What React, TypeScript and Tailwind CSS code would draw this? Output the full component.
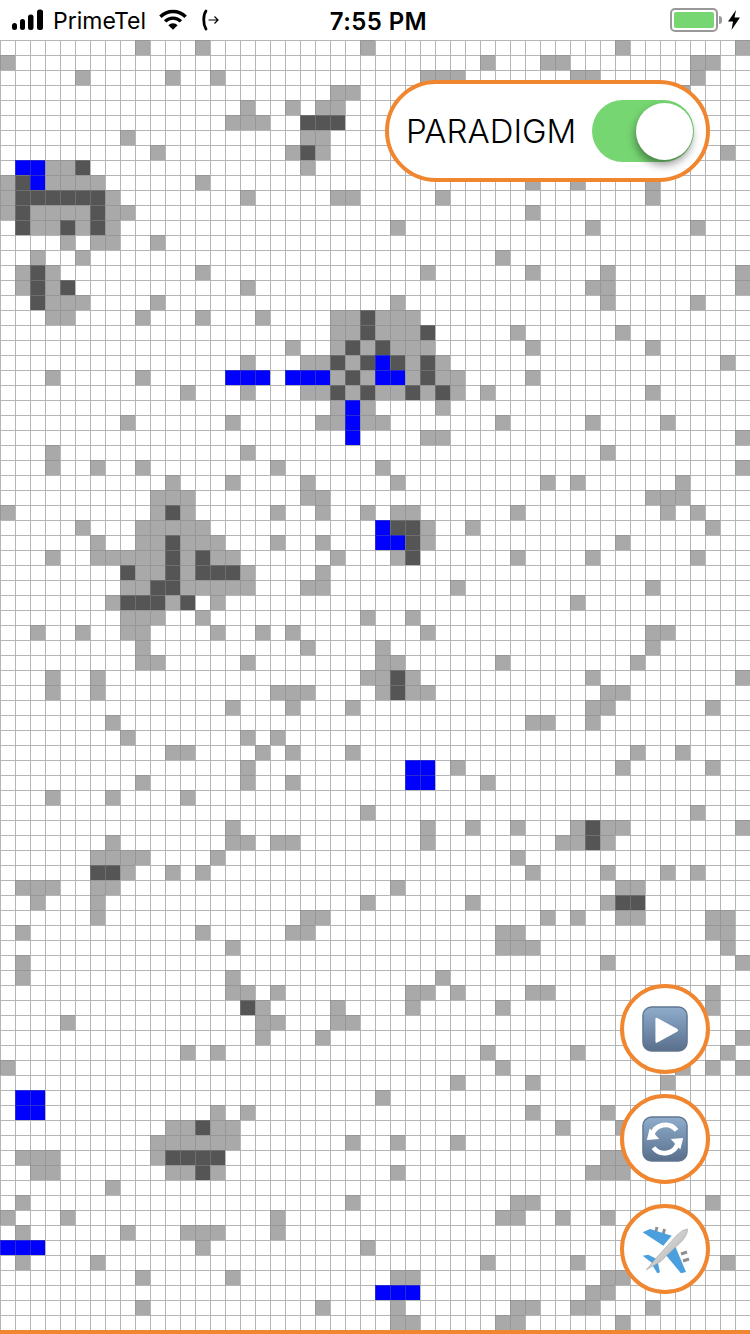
import * as React from "react";

type Row = { g?: number[]; d?: number[]; b?: number[] };

// sparse board: row index -> grey / dark / blue columns
const BOARD: Record<number, Row> = {
  0: { g: [9, 13, 24, 41, 49] },
  1: { g: [0, 32, 36, 37, 46, 47] },
  2: { g: [5, 11, 14, 28, 29, 30, 38, 39, 46] },
  3: { g: [22, 23, 45] },
  4: { g: [16, 19, 21, 22] },
  5: { g: [15, 16, 17], d: [20, 21, 22] },
  6: { g: [8, 20, 21] },
  7: { g: [10, 19, 21, 48], d: [20] },
  8: { g: [3, 4, 20], b: [1, 2], d: [5] },
  9: { g: [0, 3, 4, 5, 6, 13, 35, 38, 43], d: [1], b: [2] },
  10: { g: [0, 7, 16, 22, 23, 29, 43], d: [1, 2, 3, 4, 5, 6] },
  11: { g: [0, 2, 3, 4, 5, 7, 8, 35], d: [1, 6] },
  12: { g: [2, 3, 5, 7, 26, 39, 46], d: [1, 4, 6] },
  13: { g: [4, 6, 7, 10] },
  14: { g: [2, 5, 33] },
  15: { g: [1, 3, 13, 28, 35, 40, 49], d: [2] },
  16: { g: [1, 3, 16, 39, 40, 49], d: [2, 4] },
  17: { g: [3, 4, 5, 10, 26, 40, 46], d: [2] },
  18: { g: [3, 4, 9, 13, 17, 22, 23, 25, 26, 27], d: [24] },
  19: { g: [22, 23, 25, 26, 27, 34, 41], d: [24, 28] },
  20: { g: [19, 22, 24, 26, 27, 28, 35, 43], d: [23, 25] },
  21: { g: [16, 20, 21, 23, 27, 29, 48], d: [22, 24, 26, 28], b: [25] },
  22: { g: [3, 9, 22, 24, 27, 29, 30, 35], d: [23, 28], b: [15, 16, 17, 19, 20, 21, 25, 26] },
  23: { g: [12, 16, 20, 21, 23, 25, 26, 28, 30, 32, 43], d: [22, 24, 27, 29] },
  24: { g: [22, 24, 29], b: [23] },
  25: { g: [8, 15, 21, 22, 24, 25, 33, 39, 44], b: [23] },
  26: { g: [28, 29, 49], b: [23] },
  27: { g: [3, 16, 40] },
  28: { g: [3, 6, 9, 18, 25, 49] },
  29: { g: [11, 15, 20, 26, 36, 38, 45] },
  30: { g: [10, 11, 12, 20, 21, 43, 44, 45] },
  31: { g: [0, 10, 12, 18, 21, 24, 26, 27, 34, 44, 46], d: [11] },
  32: { g: [5, 9, 10, 11, 12, 13, 28, 31, 47], d: [26, 27], b: [25] },
  33: { g: [6, 9, 10, 12, 13, 14, 18, 21, 28, 41], d: [11, 27], b: [25, 26] },
  34: { g: [3, 6, 7, 8, 9, 10, 12, 14, 15, 22, 26, 34, 39, 46], d: [11, 13, 27] },
  35: { g: [9, 10, 12, 16, 21], d: [8, 11, 13, 14, 15] },
  36: { g: [8, 9, 12, 13, 14, 15, 16, 20, 21, 30, 43], d: [10, 11] },
  37: { g: [7, 11, 14, 38], d: [8, 9, 10, 12] },
  38: { g: [8, 9, 10, 13, 24, 27] },
  39: { g: [2, 5, 8, 9, 14, 17, 19, 28, 43, 44] },
  40: { g: [9, 20, 25, 43] },
  41: { g: [9, 10, 16, 25, 26, 33, 42] },
  42: { g: [3, 6, 24, 25, 27, 39, 49], d: [26] },
  43: { g: [3, 6, 18, 19, 20, 25, 27, 28, 40, 41], d: [26] },
  44: { g: [15, 19, 23, 39, 40, 47] },
  45: { g: [7, 35, 36, 39] },
  46: { g: [8, 16, 18] },
  47: { g: [11, 12, 17, 19, 23, 42, 45] },
  48: { g: [16, 30, 41, 47], b: [27, 28] },
  49: { g: [9, 16, 19, 32], b: [27, 28] },
  50: { g: [3, 7, 12] },
  51: { g: [24, 46] },
  52: { g: [15, 28, 31, 34, 38, 40, 41, 49], d: [39] },
  53: { g: [7, 15, 16, 18, 19, 28, 37, 38, 40], d: [39] },
  54: { g: [6, 7, 8, 9, 14, 34] },
  55: { g: [8, 11, 13, 35, 40, 44, 46], d: [6, 7] },
  56: { g: [1, 2, 3, 6, 7, 26, 41, 42] },
  57: { g: [2, 6, 24, 31, 40], d: [41, 42] },
  58: { g: [6, 20, 21, 36, 38, 41, 42, 47, 48] },
  59: { g: [1, 13, 19, 20, 33, 34, 47, 48] },
  60: { g: [15, 33, 34, 35, 48] },
  61: { g: [1, 40, 49] },
  62: { g: [1, 15, 29] },
  63: { g: [15, 16, 18, 27, 28, 30, 35, 36, 47] },
  64: { g: [17, 22, 27, 33, 47], d: [16] },
  65: { g: [4, 17, 18, 22, 23] },
  66: { g: [17, 21, 49] },
  67: { g: [12, 14, 32, 38, 48] },
  68: { g: [0, 33, 45, 47, 49] },
  69: { g: [30, 35, 44] },
  70: { g: [25], b: [1, 2] },
  71: { g: [14, 16, 35, 40], b: [1, 2] },
  72: { g: [11, 12, 14, 15, 37, 41], d: [13] },
  73: { g: [10, 11, 12, 13, 14, 15, 23, 26, 30] },
  74: { g: [1, 2, 3, 10, 40, 41], d: [11, 12, 13, 14] },
  75: { g: [2, 3, 11, 12, 14, 26, 39, 40, 41], d: [13] },
  76: { g: [7] },
  77: { g: [1, 23, 34, 35, 47] },
  78: { g: [0, 4, 18, 33, 34, 37, 40] },
  79: { g: [1, 8, 12, 13, 14, 18] },
  80: { g: [13, 24], b: [0, 1, 2] },
  81: { g: [1, 6, 32, 38, 48] },
  82: { g: [9, 15, 26, 27, 40, 41] },
  83: { g: [39, 40], b: [25, 26, 27] },
  84: { g: [9, 21, 26, 34, 35, 38, 39, 43] },
  85: { g: [26, 27, 33, 34, 41] },
};

function cellClass(r: number, c: number) {
  const row = BOARD[r];
  if (row?.b?.includes(c)) return "bg-[#0000ff] border-[#2a2ad0]";
  if (row?.d?.includes(c)) return "bg-[#555555] border-[#6e6e6e]";
  if (row?.g?.includes(c)) return "bg-[#a9a9a9] border-[#969696]";
  return "bg-white border-[#b5b5b5]";
}

function Board() {
  const cells = [];
  for (let r = 0; r < 86; r++) {
    for (let c = 0; c < 50; c++) {
      cells.push(<div key={`${r}-${c}`} className={`border-t border-l ${cellClass(r, c)}`} />);
    }
  }
  return <div className="grid grid-cols-[repeat(50,15px)] grid-rows-[repeat(86,15px)]">{cells}</div>;
}

function StatusBar() {
  return (
    <div className="h-10 flex items-center justify-between pl-3 pr-[10px] bg-white text-black font-['Inter',sans-serif]">
      <div className="flex items-center w-[280px]">
        <svg width="36" height="22" viewBox="0 0 36 22" className="mr-2">
          <rect x="0" y="14" width="5" height="7" rx="2.5" fill="#000" />
          <rect x="8" y="10" width="5" height="11" rx="2.5" fill="#000" />
          <rect x="16" y="5.5" width="5.5" height="15.5" rx="2.5" fill="#000" />
          <rect x="25" y="0.5" width="6" height="20.5" rx="2.5" fill="#000" />
        </svg>
        <span className="text-[23px] leading-none mr-[13px] -ml-[3px] mt-[3px]">PrimeTel</span>
        <svg width="28" height="22" viewBox="0 0 30 22" className="mr-[15px]">
          <path d="M1.5 7.5 A19 19 0 0 1 28.5 7.5" fill="none" stroke="#000" strokeWidth="3.6" />
          <path d="M6.5 12.5 A12 12 0 0 1 23.5 12.5" fill="none" stroke="#000" strokeWidth="3.6" />
          <path d="M10 16.5 A7 7 0 0 1 20 16.5 L15 21.5 Z" fill="#000" />
        </svg>
        <svg width="18" height="22" viewBox="0 0 18 22">
          <path d="M4 2 C1 6 1 15 4 20" fill="none" stroke="#000" strokeWidth="2.8" strokeLinecap="round" />
          <path d="M6.5 11 H16 M12.5 7.5 L16 11 L12.5 14.5" fill="none" stroke="#000" strokeWidth="1.2" />
        </svg>
      </div>
      <span className="text-[24px] leading-none font-semibold tracking-[0.4px] mt-[3px] ml-[5px]">7:55 PM</span>
      <div className="w-[280px] flex items-center justify-end">
        <div className="w-[48px] h-[24px] rounded-[5px] border-2 border-[#999999] p-[2px] flex">
          <div className="flex-1 bg-[#76d672] rounded-[2px]" />
        </div>
        <div className="w-[3px] h-[8px] bg-[#999999] rounded-r-sm ml-[1px] mr-[6px]" />
        <svg width="12" height="20" viewBox="0 0 12 20">
          <path d="M8 0 L0 11.5 H5 L3.5 20 L12 7.5 H6.5 Z" fill="#000" />
        </svg>
      </div>
    </div>
  );
}

function ParadigmToggle() {
  return (
    <div className="absolute left-[385px] top-[80px] w-[325px] h-[102px] rounded-full border-4 border-[#f0862f] bg-white flex items-center pl-[17px] font-['Inter',sans-serif]">
      <span className="text-[33px] leading-none font-light text-black w-[186px]">PARADIGM</span>
      <div className="w-[102px] h-[62px] rounded-full bg-[#76d672] flex items-center justify-end pr-[1px]">
        <div className="w-[57px] h-[57px] rounded-full bg-white shadow-[-1px_5px_8px_rgba(0,0,0,0.4)]" />
      </div>
    </div>
  );
}

function PlayIcon() {
  return (
    <svg width="46" height="46" viewBox="0 0 48 48">
      <defs>
        <linearGradient id="tile" x1="0" y1="0" x2="0" y2="1">
          <stop offset="0" stopColor="#8fadcc" />
          <stop offset="1" stopColor="#596f8c" />
        </linearGradient>
      </defs>
      <rect x="1" y="1" width="46" height="46" rx="9" fill="url(#tile)" stroke="#5f7690" strokeWidth="1.5" />
      <path d="M14 13.5 Q14 11.5 16 12.5 L37 24 Q38.5 25.5 37 26.5 L16 38 Q14 39 14 37 Z" fill="#fff" />
    </svg>
  );
}

function RefreshIcon() {
  return (
    <svg width="46" height="46" viewBox="0 0 48 48">
      <rect x="1" y="1" width="46" height="46" rx="9" fill="url(#tile)" stroke="#5f7690" strokeWidth="1.5" />
      <path d="M10.5 20 A14.5 14.5 0 0 1 36 15" fill="none" stroke="#fff" strokeWidth="5" />
      <path d="M5 25 L18 24 L8 13 Z" fill="#fff" />
      <path d="M37.5 28 A14.5 14.5 0 0 1 12 33" fill="none" stroke="#fff" strokeWidth="5" />
      <path d="M43 23 L30 24 L40 35 Z" fill="#fff" />
    </svg>
  );
}

function PlaneIcon() {
  return (
    <svg width="50" height="50" viewBox="0 0 50 50">
      <defs>
        <linearGradient id="hull" x1="0" y1="0" x2="1" y2="1">
          <stop offset="0" stopColor="#f6f6f6" />
          <stop offset="0.6" stopColor="#c4c4c4" />
          <stop offset="1" stopColor="#7f7f7f" />
        </linearGradient>
      </defs>
      <g stroke="#8f8f8f" strokeWidth="3">
        <path d="M17 3 L15.5 9" />
        <path d="M24.5 5 L23 11" />
        <path d="M47 28 L41 30" />
        <path d="M49 35 L43 37" />
      </g>
      <path d="M2.7 8.3 L10 5 L31.7 11.7 L23.3 21.7 Z" fill="#4a9fdc" />
      <path d="M35 21.7 L46 48 L41 49.3 L25 30 Z" fill="#4a9fdc" />
      <path d="M2.7 31.7 L8.3 30.7 L16.7 35 L13.3 40 Z" fill="#4a9fdc" />
      <path d="M20 48.3 L17.3 49.3 L11.7 40 L17.3 36 Z" fill="#4a9fdc" />
      <path d="M6 46 L17 33 L37 11 Q43 5 47.5 5 Q48 10 42 17 L20 38 Z" fill="url(#hull)" stroke="#9a9a9a" strokeWidth="0.5" />
    </svg>
  );
}

function RoundButton({ children }: { children: React.ReactNode }) {
  return (
    <div className="w-[90px] h-[90px] rounded-full border-4 border-[#f0862f] bg-white flex items-center justify-center">
      {children}
    </div>
  );
}

export default function App() {
  return (
    <div className="relative w-[750px] h-[1334px] overflow-hidden bg-white flex flex-col">
      <StatusBar />
      <Board />
      <div className="h-1 bg-[#f0862f]" />
      <ParadigmToggle />
      <div className="absolute left-[620px] top-[984px] flex flex-col gap-5">
        <RoundButton><PlayIcon /></RoundButton>
        <RoundButton><RefreshIcon /></RoundButton>
        <RoundButton><PlaneIcon /></RoundButton>
      </div>
    </div>
  );
}
